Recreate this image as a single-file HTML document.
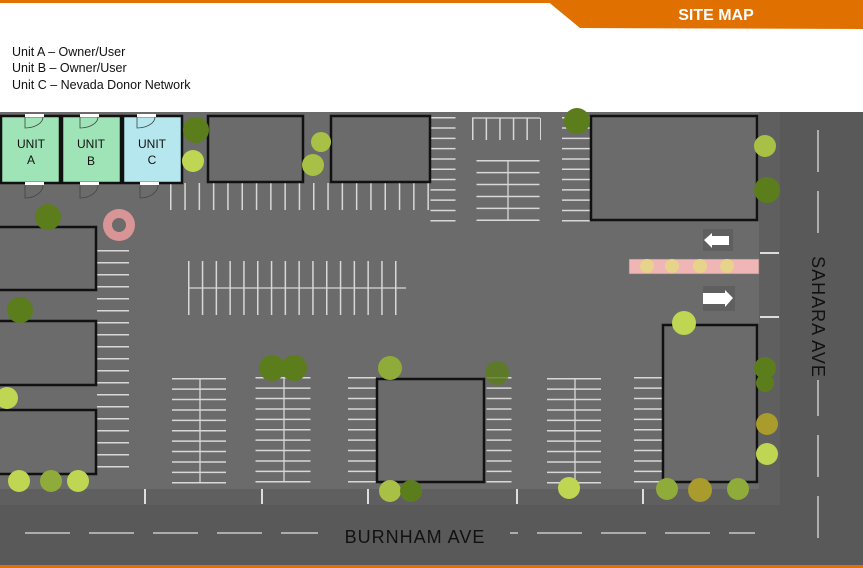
<!DOCTYPE html>
<html><head><meta charset="utf-8"><style>
html,body{margin:0;padding:0;background:#fff;width:863px;height:568px;overflow:hidden;font-family:"Liberation Sans",sans-serif}
</style></head><body>
<svg width="863" height="568" xmlns="http://www.w3.org/2000/svg" style="display:block">
<rect x="0" y="0" width="863" height="3" fill="#e07000"/>
<polygon points="546,0 863,0 863,29 580,28" fill="#e07000"/>
<text x="716" y="20" fill="#fff" font-weight="bold" font-size="16" text-anchor="middle">SITE MAP</text>
<g font-size="12.5" fill="#111">
<text x="12" y="56">Unit A – Owner/User</text>
<text x="12" y="72">Unit B – Owner/User</text>
<text x="12" y="89">Unit C – Nevada Donor Network</text>
</g>
<rect x="0" y="112" width="863" height="456" fill="#6b6b6b"/>
<rect x="0" y="489" width="780" height="16" fill="#5f5f5f"/>
<rect x="0" y="505" width="863" height="60" fill="#595959"/>
<rect x="759" y="112" width="21" height="393" fill="#5f5f5f"/>
<rect x="780" y="112" width="83" height="456" fill="#595959"/>
<rect x="0" y="565" width="863" height="3" fill="#e07000"/>
<line x1="25" y1="533" x2="755" y2="533" stroke="#ddd" stroke-width="1.3" stroke-dasharray="45 19"/>
<rect x="318" y="522" width="192" height="20" fill="#595959"/>
<text x="415" y="543" font-size="18" fill="#111" text-anchor="middle" letter-spacing="1">BURNHAM  AVE</text>
<line x1="818" y1="130" x2="818" y2="550" stroke="#ddd" stroke-width="1.3" stroke-dasharray="42 19"/>
<rect x="805" y="250" width="30" height="130" fill="#595959"/>
<text transform="translate(812,317) rotate(90)" font-size="18" fill="#111" text-anchor="middle" letter-spacing="1">SAHARA  AVE</text>
<g stroke="#ddd" stroke-width="2">
<line x1="145" y1="489" x2="145" y2="504"/><line x1="262" y1="489" x2="262" y2="504"/><line x1="368" y1="489" x2="368" y2="504"/><line x1="517" y1="489" x2="517" y2="504"/><line x1="643" y1="489" x2="643" y2="504"/>
<line x1="760" y1="253" x2="779" y2="253"/><line x1="760" y1="317" x2="779" y2="317"/>
</g>
<g stroke="#d8d8d8" fill="none">
<line x1="170" y1="196.5" x2="433" y2="196.5" stroke-width="27" stroke-dasharray="1.5 12.8"/>
<line x1="113" y1="250" x2="113" y2="476" stroke-width="32" stroke-dasharray="1.5 10.5"/>
<line x1="188" y1="288" x2="408" y2="288" stroke-width="54" stroke-dasharray="1.5 12.3"/>
<line x1="189" y1="288" x2="406" y2="288" stroke-width="1.3"/>
<line x1="199" y1="378" x2="199" y2="484" stroke-width="54" stroke-dasharray="1.5 8.9"/>
<line x1="200" y1="378" x2="200" y2="482" stroke-width="1.3"/>
<line x1="283" y1="377" x2="283" y2="484" stroke-width="55" stroke-dasharray="1.5 8.9"/>
<line x1="284" y1="377" x2="284" y2="482" stroke-width="1.3"/>
<line x1="362" y1="377" x2="362" y2="484" stroke-width="28" stroke-dasharray="1.5 8.9"/>
<line x1="499" y1="377" x2="499" y2="484" stroke-width="25" stroke-dasharray="1.5 8.9"/>
<line x1="574" y1="378" x2="574" y2="484" stroke-width="54" stroke-dasharray="1.5 8.9"/>
<line x1="575" y1="378" x2="575" y2="482" stroke-width="1.3"/>
<line x1="648" y1="377" x2="648" y2="484" stroke-width="28" stroke-dasharray="1.5 8.9"/>
<line x1="443" y1="117" x2="443" y2="222" stroke-width="25" stroke-dasharray="1.5 8.8"/>
<line x1="576" y1="117" x2="576" y2="222" stroke-width="28" stroke-dasharray="1.5 8.8"/>
<line x1="508" y1="160" x2="508" y2="222" stroke-width="63" stroke-dasharray="1.5 10.4"/>
<line x1="508" y1="161" x2="508" y2="220" stroke-width="1.3"/>
<line x1="472" y1="129" x2="541" y2="129" stroke-width="22" stroke-dasharray="1.5 12.1"/>
<line x1="472" y1="118" x2="540" y2="118" stroke-width="1.3"/>
</g>
<g stroke="#111" stroke-width="2.5">
<rect x="1" y="116" width="59" height="67" fill="#9ee4b6"/>
<rect x="62" y="116" width="59" height="67" fill="#9ee4b6"/>
<rect x="123" y="116" width="59" height="67" fill="#b6e7ef"/>
</g>
<g fill="#fff"><rect x="25" y="114" width="19" height="3"/><rect x="80" y="114" width="19" height="3"/><rect x="137" y="114" width="19" height="3"/>
<rect x="25" y="182" width="19" height="3"/><rect x="80" y="182" width="19" height="3"/><rect x="140" y="182" width="19" height="3"/></g>
<g fill="none" stroke="#444" stroke-width="0.8">
<path d="M25 117 v11 a18 11 0 0 0 18 -11"/><path d="M80 117 v11 a18 11 0 0 0 18 -11"/><path d="M137 117 v11 a18 11 0 0 0 18 -11"/>
<path d="M25 185 v13 a18 13 0 0 0 18 -13"/><path d="M80 185 v13 a18 13 0 0 0 18 -13"/><path d="M140 185 v13 a18 13 0 0 0 18 -13"/>
</g>
<g font-size="12" fill="#111" text-anchor="middle">
<text x="31" y="148">UNIT</text><text x="31" y="164">A</text>
<text x="91" y="148">UNIT</text><text x="91" y="165">B</text>
<text x="152" y="148">UNIT</text><text x="152" y="164">C</text>
</g>
<g fill="#6b6b6b" stroke="#111" stroke-width="2.5">
<rect x="208" y="116" width="95" height="66"/>
<rect x="331" y="116" width="99" height="66"/>
<rect x="591" y="116" width="166" height="104"/>
<rect x="-2" y="227" width="98" height="63"/>
<rect x="-2" y="321" width="98" height="64"/>
<rect x="-2" y="410" width="98" height="64"/>
<rect x="377" y="379" width="107" height="103"/>
<rect x="663" y="325" width="94" height="157"/>
</g>
<rect x="703" y="229" width="30" height="22" fill="#5f5f5f"/>
<polygon points="704,240 712,233 712,236 729,236 729,245 712,245 712,248" fill="#fff"/>
<rect x="703" y="286" width="32" height="25" fill="#5f5f5f"/>
<polygon points="733,298 725,290 725,293 703,293 703,304 725,304 725,307" fill="#fff"/>
<rect x="629" y="259" width="130" height="15" fill="#f0b6b6" stroke="#777" stroke-width="0.6"/>
<g fill="#e7d38a"><circle cx="647" cy="266" r="7"/><circle cx="672" cy="266" r="7"/><circle cx="700" cy="266" r="7"/><circle cx="727" cy="266" r="7"/></g>
<g>
<circle cx="196" cy="130" r="13" fill="#5c7d1c"/>
<circle cx="193" cy="161" r="11" fill="#bfd653"/>
<circle cx="321" cy="142" r="10" fill="#a9c046"/>
<circle cx="313" cy="165" r="11" fill="#a9c046"/>
<circle cx="48" cy="217" r="13" fill="#5c7d1c"/>
<circle cx="119" cy="225" r="16" fill="#e59a9a" opacity="0.9"/>
<circle cx="119" cy="225" r="7" fill="#6b6b6b"/>
<circle cx="577" cy="121" r="13" fill="#5c7d1c"/>
<circle cx="765" cy="146" r="11" fill="#a9c046"/>
<circle cx="767" cy="190" r="13" fill="#5c7d1c"/>
<circle cx="684" cy="323" r="12" fill="#bfd653"/>
<circle cx="20" cy="310" r="13" fill="#5c7d1c"/>
<circle cx="7" cy="398" r="11" fill="#bfd653"/>
<circle cx="19" cy="481" r="11" fill="#bfd653"/>
<circle cx="51" cy="481" r="11" fill="#8fab3a"/>
<circle cx="78" cy="481" r="11" fill="#bfd653"/>
<circle cx="272" cy="368" r="13" fill="#5c7d1c"/>
<circle cx="294" cy="368" r="13" fill="#5c7d1c"/>
<circle cx="390" cy="368" r="12" fill="#8fab3a"/>
<circle cx="497" cy="373" r="12" fill="#5c7d1c" opacity="0.8"/>
<circle cx="390" cy="491" r="11" fill="#a9c046"/>
<circle cx="411" cy="491" r="11" fill="#5c7d1c"/>
<circle cx="569" cy="488" r="11" fill="#bfd653"/>
<circle cx="765" cy="368" r="11" fill="#5c7d1c"/>
<circle cx="765" cy="383" r="9" fill="#5c7d1c"/>
<circle cx="767" cy="424" r="11" fill="#a99b2c"/>
<circle cx="767" cy="454" r="11" fill="#bfd653"/>
<circle cx="667" cy="489" r="11" fill="#8fab3a"/>
<circle cx="700" cy="490" r="12" fill="#a99b2c"/>
<circle cx="738" cy="489" r="11" fill="#8fab3a"/>
</g>
</svg>
</body></html>
